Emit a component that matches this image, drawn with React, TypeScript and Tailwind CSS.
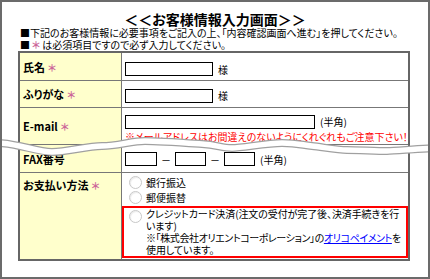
import React from 'react';

const FONT = "font-['Noto_Sans_CJK_JP','Noto_Sans',sans-serif] [font-feature-settings:'palt']";

const Req = () => <span className="ml-[3px] text-[10px] font-bold text-[#cc6699]">＊</span>;

const Box = ({ w }: { w: string }) => <div className={`h-[14px] border border-black bg-white ${w}`} />;

const Radio = () => (
  <span className="inline-block h-[13px] w-[13px] shrink-0 rounded-full border border-[#c8c8c8] bg-white shadow-[inset_1px_1px_1px_rgba(0,0,0,0.08)]" />
);

function Wave() {
  const d =
    'M-5,141 C15,141 35,150 50,150 S85,144 100,144 S130,139 143,139 S185,141 200,142 S220,146 230,146 S265,141 280,141 S300,143 310,144 S335,148 345,148 S375,149 385,149 S420,146 440,146';
  return (
    <svg className="pointer-events-none absolute left-0 top-0" width="430" height="279">
      <path d={d} fill="none" stroke="#a0a0a0" strokeWidth="8" />
      <path d={d} fill="none" stroke="#ffffff" strokeWidth="5.5" />
    </svg>
  );
}

export default function App() {
  return (
    <div className={`relative h-[279px] w-[430px] overflow-hidden border-2 border-[#6b6b6b] bg-white text-black ${FONT}`}>
      <div className="pt-[10px] text-center text-[14px] font-bold leading-[15px]">＜＜お客様情報入力画面＞＞</div>
      <div className="ml-[18px] whitespace-nowrap text-[10px] leading-[12px]">■下記のお客様情報に必要事項をご記入の上、「内容確認画面へ進む」を押してください。</div>
      <div className="ml-[18px] whitespace-nowrap text-[10px] leading-[12px]">
        ■<span className="mx-[2px] font-bold text-[#cc6699]">＊</span>は必須項目ですので必ず入力してください。
      </div>

      <div className="ml-[16px] w-[392px] border-2 border-[#666]">
        <div className="flex h-[28px] border-b border-[#777]">
          <div className="flex w-[102px] items-center border-r border-[#777] bg-[#ffffcc] pl-[3px] pt-[2px] text-[11px] font-bold">氏名<Req /></div>
          <div className="flex items-center gap-[5px] pl-[3px] pt-[5px] text-[10px]"><Box w="w-[88px]" />様</div>
        </div>
        <div className="flex h-[27px] border-b border-[#777]">
          <div className="flex w-[102px] items-center border-r border-[#777] bg-[#ffffcc] pl-[3px] text-[11px] font-bold">ふりがな<Req /></div>
          <div className="flex items-center gap-[5px] pl-[3px] pt-[3px] text-[10px]"><Box w="w-[88px]" />様</div>
        </div>
        <div className="flex h-[37px] border-b border-[#777]">
          <div className="flex w-[102px] items-center border-r border-[#777] bg-[#ffffcc] pl-[3px] text-[11px] font-bold">E-mail<Req /></div>
          <div className="whitespace-nowrap pl-[3px] pt-[7px] text-[10px] leading-[12px]">
            <div className="flex items-center gap-[5px]"><Box w="w-[190px]" />(半角)</div>
            <div className="mt-[2px] text-[#ff0000]">※メールアドレスはお間違えのないようにくれぐれもご注意下さい！</div>
          </div>
        </div>
        <div className="flex h-[28px] border-b border-[#777]">
          <div className="flex w-[102px] items-center border-r border-[#777] bg-[#ffffcc] pl-[3px] pt-[1px] text-[11px] font-bold">FAX番号</div>
          <div className="flex items-center pl-[3px] pt-[1px] text-[10px]">
            <Box w="w-[32px]" />
            <span className="mx-[4px]">－</span>
            <Box w="w-[31px]" />
            <span className="mx-[4px]">－</span>
            <Box w="w-[31px]" />
            <span className="ml-[5px]">(半角)</span>
          </div>
        </div>
        <div className="flex h-[86px]">
          <div className="w-[102px] border-r border-[#777] bg-[#ffffcc] pl-[3px] pt-[5px] text-[11px] font-bold leading-[14px]">お支払い方法<Req /></div>
          <div className="flex min-w-0 flex-1 flex-col pb-[1px] text-[10px] leading-[12px]">
            <div className="flex items-center gap-[4px] pl-[7px] pt-[3px]"><Radio />銀行振込</div>
            <div className="flex items-center gap-[4px] pl-[7px] pt-[2px]"><Radio />郵便振替</div>
            <div className="mt-[2px] flex flex-1 gap-[4px] overflow-hidden border-2 border-[#ff0000] pl-[5px] leading-[12px]">
              <div className="pt-[2px]"><Radio /></div>
              <div className="whitespace-nowrap tracking-[-0.1px]">
                <div>クレジットカード決済(注文の受付が完了後、決済手続きを行</div>
                <div>います)</div>
                <div className="tracking-[-0.4px]">※「株式会社オリエントコーポレーション」の<span className="text-[#0000ff] underline">オリコペイメント</span>を</div>
                <div>使用しています。</div>
              </div>
            </div>
          </div>
        </div>
      </div>
      <Wave />
    </div>
  );
}
